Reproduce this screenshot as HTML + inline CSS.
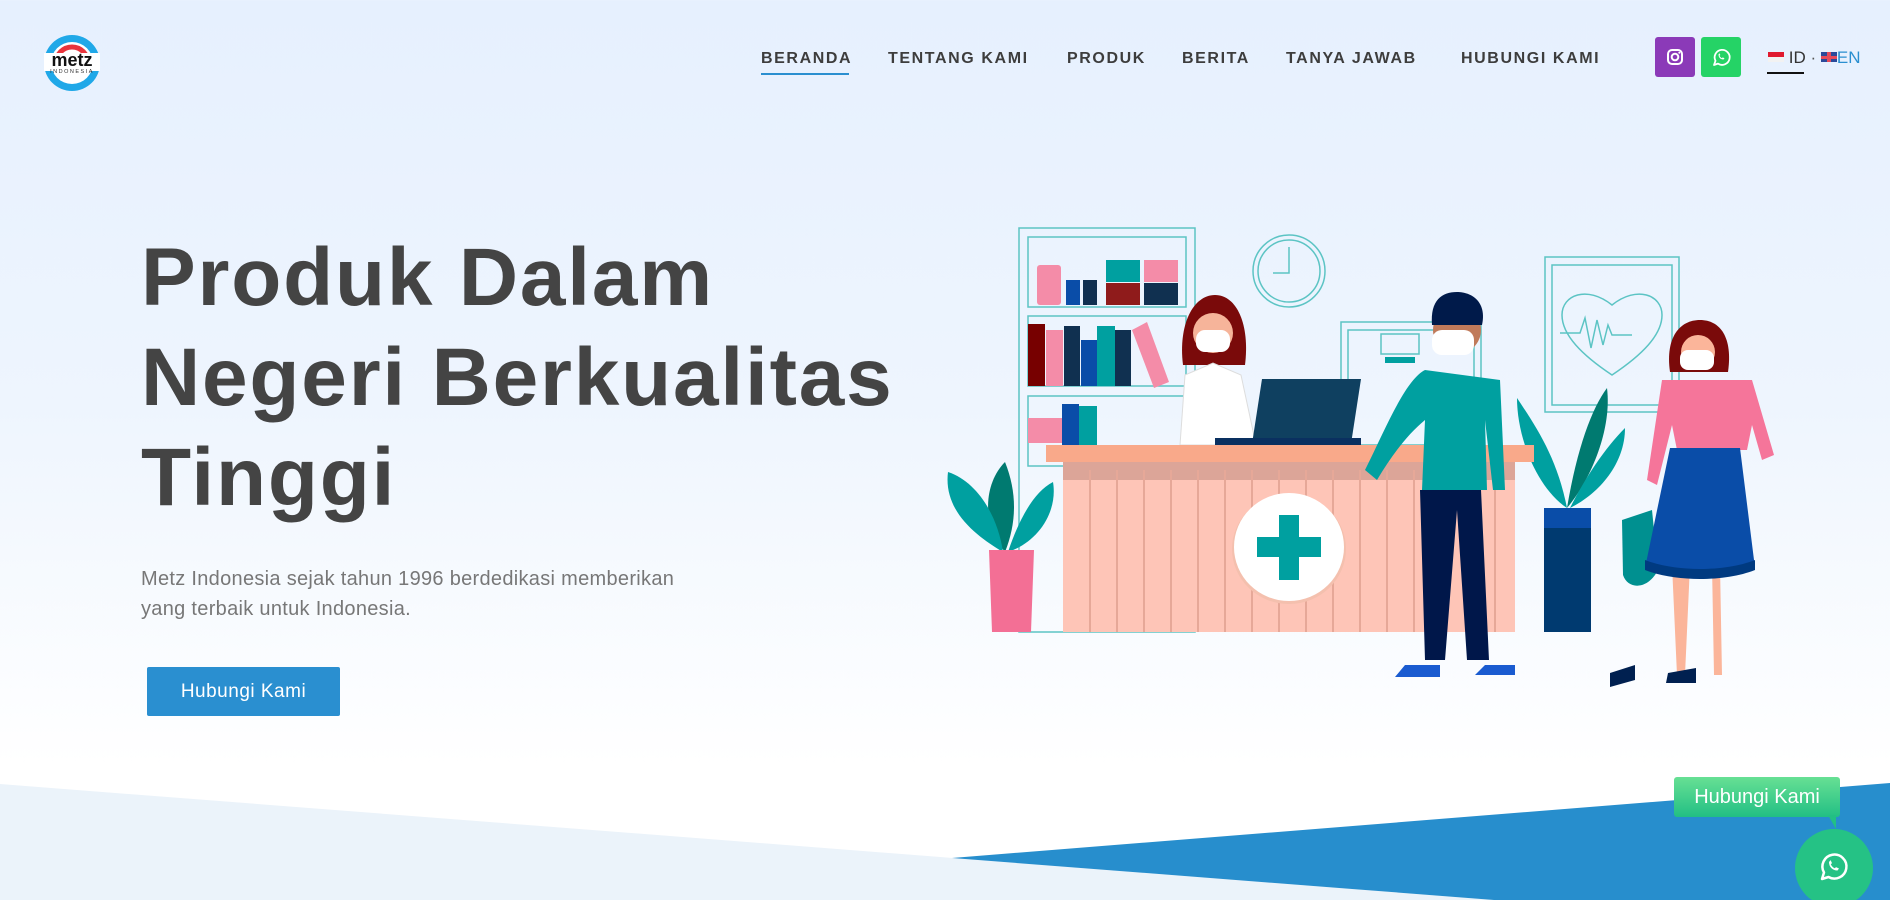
<!DOCTYPE html>
<html><head><meta charset="utf-8">
<style>
*{margin:0;padding:0;box-sizing:border-box}
html,body{width:1890px;height:900px;overflow:hidden}
body{font-family:"Liberation Sans",sans-serif;background:linear-gradient(180deg,#e6f0fe 0%,#eef5fe 45%,#ffffff 85%);position:relative}
.nav a{position:absolute;top:50px;font-size:16px;font-weight:bold;color:#3d3d3d;letter-spacing:1.6px;text-decoration:none;white-space:nowrap}
h1{position:absolute;left:141px;top:228px;font-size:82px;line-height:100px;font-weight:bold;color:#444;letter-spacing:1.8px}
p.lead{position:absolute;left:141px;top:564px;font-size:20px;line-height:30px;color:#777;letter-spacing:.3px;white-space:nowrap}
.btn{position:absolute;left:147px;top:667px;width:193px;height:49px;background:#2a8fd0;color:#fff;font-size:19px;letter-spacing:.5px;text-align:center;line-height:49px;border-radius:2px}
</style></head><body>
<svg style="position:absolute;left:40px;top:33px" width="64" height="60" viewBox="0 0 64 60">
<circle cx="32" cy="30" r="28" fill="#20a8e8"/><circle cx="32" cy="30" r="21" fill="#fff"/>
<path d="M16 30a16 16 0 0 1 32 0" fill="none" stroke="#e8343c" stroke-width="5"/>
<rect x="4" y="20" width="56" height="18" fill="#fff"/>
<text x="32" y="33" text-anchor="middle" font-family="Liberation Sans" font-weight="bold" font-size="18" fill="#111">metz</text>
<text x="32" y="40" text-anchor="middle" font-family="Liberation Sans" font-size="5.5" letter-spacing="1.5" fill="#333">INDONESIA</text>
</svg>
<div class="nav">
<a style="left:761px">BERANDA</a>
<div style="position:absolute;left:761px;top:73px;width:88px;height:2px;background:#2a8fd0"></div>
<a style="left:888px">TENTANG KAMI</a>
<a style="left:1067px">PRODUK</a>
<a style="left:1182px">BERITA</a>
<a style="left:1286px">TANYA JAWAB</a>
<a style="left:1461px">HUBUNGI KAMI</a>
</div>
<div style="position:absolute;left:1655px;top:37px;width:40px;height:40px;background:#8b3ab8;border-radius:3px">
<svg width="40" height="40" viewBox="0 0 40 40"><rect x="13" y="13" width="14" height="14" rx="4" fill="none" stroke="#fff" stroke-width="2"/><circle cx="20" cy="20" r="3.3" fill="none" stroke="#fff" stroke-width="2"/><circle cx="24.3" cy="15.7" r="1" fill="#fff"/></svg></div>
<div style="position:absolute;left:1701px;top:37px;width:40px;height:40px;background:#25d366;border-radius:3px">
<svg width="40" height="40" viewBox="0 0 40 40"><path d="M13 28l1.5-4.2A7.5 7.5 0 1 1 17 26.6z" fill="none" stroke="#fff" stroke-width="1.8" stroke-linejoin="round"/><path d="M17.5 17.5c0 3 2 5 5 5l1-1.2-1.8-.9-.8.8c-1-.4-2-1.4-2.4-2.4l.8-.8-.9-1.8z" fill="#fff"/></svg></div>
<div style="position:absolute;left:1768px;top:48px;font-size:17px;color:#333;white-space:nowrap">
<span style="display:inline-block;width:16px;height:10px;background:linear-gradient(#e0192f 50%,#f2f2f2 50%);vertical-align:1px"></span> ID <span style="color:#555">·</span> <span style="display:inline-block;width:16px;height:10px;background:#2b4a9a;position:relative;vertical-align:1px;overflow:hidden"><i style="position:absolute;left:6px;top:0;width:4px;height:10px;background:#e64b5a"></i><i style="position:absolute;left:0;top:3.5px;width:16px;height:3px;background:#e64b5a"></i></span><span style="color:#2a8fd0">EN</span></div>
<div style="position:absolute;left:1767px;top:72px;width:37px;height:2px;background:#111"></div>

<h1>Produk Dalam<br>Negeri Berkualitas<br>Tinggi</h1>
<p class="lead">Metz Indonesia sejak tahun 1996 berdedikasi memberikan<br>yang terbaik untuk Indonesia.</p>
<div class="btn">Hubungi Kami</div>

<svg style="position:absolute;left:0;top:0" width="1890" height="900" viewBox="0 0 1890 900">
<g fill="none" stroke="#5cc4c4" stroke-width="1.5">
<rect x="1019" y="228" width="176" height="404"/><rect x="1028" y="237" width="158" height="70"/>
<rect x="1028" y="316" width="158" height="70"/><rect x="1028" y="396" width="158" height="70"/>
<circle cx="1289" cy="271" r="36"/><circle cx="1289" cy="271" r="31"/><path d="M1289 247v26h-16"/>
<rect x="1341" y="322" width="140" height="130"/><rect x="1348" y="330" width="126" height="115"/><rect x="1381" y="334" width="38" height="20"/>
<rect x="1545" y="257" width="134" height="155"/><rect x="1552" y="265" width="120" height="140"/>
<path d="M1612 375c-30-20-50-40-50-60 0-20 25-30 50-10 25-20 50-10 50 10 0 20-20 40-50 60z"/>
<path d="M1560 333h20l5-15 6 30 6-28 6 25 5-20 4 10h20"/>
</g>
<rect x="1385" y="357" width="30" height="6" fill="#00a0a0"/>
<rect x="1037" y="265" width="24" height="40" rx="3" fill="#f48ca8"/><rect x="1066" y="280" width="14" height="25" fill="#0a4da8"/><rect x="1083" y="280" width="14" height="25" fill="#103050"/>
<rect x="1106" y="260" width="34" height="22" fill="#00a0a0"/><rect x="1106" y="283" width="34" height="22" fill="#8f1b1b"/><rect x="1144" y="260" width="34" height="22" fill="#f48ca8"/><rect x="1144" y="283" width="34" height="22" fill="#103050"/>
<rect x="1028" y="324" width="17" height="62" fill="#700"/><rect x="1046" y="330" width="17" height="56" fill="#f48ca8"/><rect x="1064" y="326" width="16" height="60" fill="#103050"/><rect x="1081" y="340" width="16" height="46" fill="#0a4da8"/><rect x="1097" y="326" width="18" height="60" fill="#00a0a0"/><rect x="1115" y="330" width="16" height="56" fill="#103050"/><path d="M1132 330l15-8 22 60-15 6z" fill="#f48ca8"/>
<rect x="1028" y="418" width="34" height="25" fill="#f48ca8"/><rect x="1062" y="404" width="17" height="42" fill="#0a4da8"/><rect x="1079" y="406" width="18" height="40" fill="#00a0a0"/>
<path d="M1005 552c-25-30-20-70 0-90 12 30 12 60 0 90z" fill="#007a70"/><path d="M1003 552c-25-15-60-40-55-80 30 10 50 45 55 80z" fill="#00a0a0"/><path d="M1008 552c10-30 25-60 45-70 5 30-15 60-45 70z" fill="#00a0a0"/>
<path d="M989 550h45l-3 82h-39z" fill="#f36f95"/>
<path d="M1567 508c-10-50-30-80-50-110 0 40 20 90 50 110z" fill="#00a0a0"/><path d="M1567 508c10-60 25-100 40-120 5 40-15 90-40 120z" fill="#007a70"/><path d="M1570 508c15-30 35-60 55-80 0 35-25 65-55 80z" fill="#00a0a0"/>
<rect x="1544" y="508" width="47" height="124" fill="#003a70"/><rect x="1544" y="508" width="47" height="20" fill="#0a4da8"/>
<path d="M1183 365c-5-40 10-70 32-70s35 30 30 70z" fill="#7a0a0a"/><circle cx="1213" cy="333" r="20" fill="#f6b49a"/><rect x="1196" y="330" width="34" height="22" rx="9" fill="#fff"/>
<path d="M1180 445l5-70 28-12 28 12 15 70z" fill="#fff" stroke="#ddd"/>
<path d="M1262 379h99l-10 65h-99z" fill="#0f4060"/><rect x="1215" y="438" width="146" height="7" fill="#0a3060"/>
<rect x="1063" y="462" width="452" height="170" fill="#fec5b7"/><rect x="1063" y="462" width="452" height="18" fill="#dca598"/>
<g stroke="#e6a898" stroke-width="2">
<path d="M1090 470v162M1117 470v162M1144 470v162M1171 470v162M1198 470v162M1225 470v162M1252 470v162M1279 470v162M1306 470v162M1333 470v162M1360 470v162M1387 470v162M1414 470v162M1441 470v162M1468 470v162M1495 470v162"/></g>
<rect x="1046" y="445" width="488" height="17" fill="#f9a98a"/>
<ellipse cx="1289" cy="549" rx="57" ry="55" fill="#f4c0ae"/><ellipse cx="1289" cy="547" rx="55" ry="54" fill="#fff"/>
<rect x="1279" y="515" width="20" height="65" fill="#00a0a0"/><rect x="1257" y="537" width="64" height="20" fill="#00a0a0"/>
<path d="M1420 490l5 170h20l12-150 10 150h22l-8-170z" fill="#00174a"/>
<path d="M1425 370c-20 10-40 60-60 100l12 10c15-25 30-45 48-60l-3 70h65l-2-70 8 70h12l-5-110z" fill="#00a0a0"/>
<circle cx="1457" cy="330" r="24" fill="#c07a5a"/><path d="M1432 325c-2-25 10-33 25-33s30 10 25 33z" fill="#001a4a"/><rect x="1432" y="330" width="42" height="25" rx="10" fill="#fff"/>
<path d="M1405 665h35v12h-45zM1485 665h30v10h-40z" fill="#1a5bd0"/>
<path d="M1670 372c-5-35 10-52 30-52s33 17 28 52z" fill="#7a0a0a"/><circle cx="1698" cy="352" r="17" fill="#fbb59a"/><rect x="1680" y="350" width="34" height="20" rx="8" fill="#fff"/>
<path d="M1662 380l-15 100 10 5 15-60 5 25h70l5-25 10 35 12-5-22-75z" fill="#f5759a"/>
<path d="M1672 565l5 110h8l5-110zM1712 565l2 110h8l-2-110z" fill="#fbb59a"/>
<path d="M1622 520l30-10 6 60c-10 20-30 20-35 5z" fill="#009090"/>
<path d="M1670 448h70l15 120c-30 10-80 10-110 0z" fill="#0a4da8"/><path d="M1645 560c30 12 80 12 110 0v10c-30 12-80 12-110 0z" fill="#003a80"/>
<path d="M1610 673l25-8v15l-25 7zM1668 673l28-5v15h-30z" fill="#002050"/>
<polygon points="0,784 1494,900 0,900" fill="#ebf3fa"/>
<polygon points="952,858 1890,783 1890,900 1494,900" fill="#278ecd"/>
</svg>
<div style="position:absolute;left:1674px;top:777px;width:166px;height:40px;background:linear-gradient(#67e094,#22bf84);border-radius:3px;color:#fff;font-size:20px;line-height:40px;text-align:center">Hubungi Kami</div>
<div style="position:absolute;left:1828px;top:815px;width:0;height:0;border-left:8px solid transparent;border-top:14px solid #22bf84"></div>
<div style="position:absolute;left:1795px;top:829px;width:78px;height:78px;border-radius:50%;background:#25c285">
<svg width="78" height="78" viewBox="0 0 78 78"><path d="M27 50l2-6.5A12 12 0 1 1 33.5 48z" fill="none" stroke="#fff" stroke-width="2.5" stroke-linejoin="round"/><path d="M34 33c0 5 3.5 8.5 8.5 8.5l1.5-2-3-1.4-1.2 1.2c-1.8-.7-3.3-2.2-4-4l1.2-1.2-1.4-3z" fill="#fff"/></svg></div>
</body></html>
